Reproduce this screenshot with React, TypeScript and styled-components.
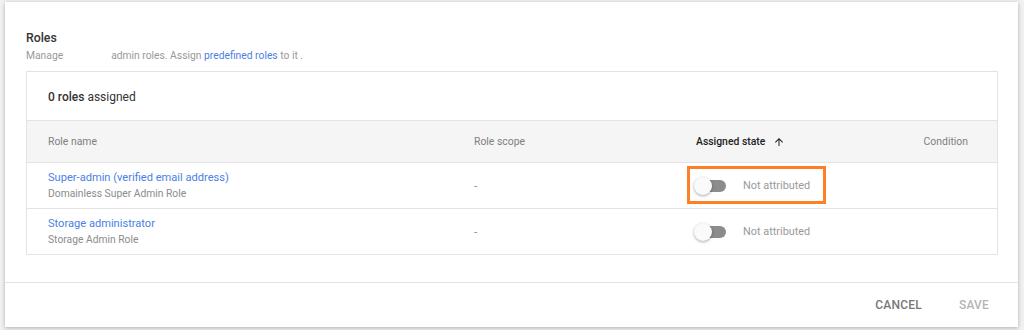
import React from 'react';
import styled, { createGlobalStyle } from 'styled-components';

const GlobalStyle = createGlobalStyle`
  html, body {
    margin: 0;
    padding: 0;
    background-color: #f1f1f1;
    font-family: Roboto, "Liberation Sans", Arial, sans-serif;
  }
`;

const Page = styled.div`
  width: 1024px;
  height: 330px;
  padding: 2px 6px 3px 5px;
  box-sizing: border-box;
  overflow: hidden;
`;

const Dialog = styled.div`
  height: 325px;
  background-color: #fff;
  box-shadow: 0 1px 4px rgba(0, 0, 0, 0.28);
  display: flex;
  flex-direction: column;
`;

const DialogBody = styled.div`
  flex: 1;
  padding: 28px 20px 0 21px;
`;

const Title = styled.div`
  font-size: 12.3px;
  line-height: 16px;
  font-weight: 500;
  color: #333;
`;

const Subtitle = styled.div`
  margin-top: 2px;
  font-size: 10.3px;
  line-height: 15px;
  color: #999;
`;

const Redacted = styled.span`
  display: inline-block;
  width: 48px;
`;

const Link = styled.a`
  color: #4a7fe4;
  text-decoration: none;
  cursor: pointer;
`;

const Card = styled.div`
  margin-top: 8px;
  border: 1px solid #e3e3e3;
`;

const CardHeader = styled.div`
  height: 48px;
  display: flex;
  align-items: center;
  padding: 2px 21px 0;
  box-sizing: border-box;
  font-size: 12px;
  color: #333;

  b {
    font-weight: 500;
    margin-right: 3px;
  }
`;

const GridRow = styled.div<{ $head?: boolean }>`
  display: grid;
  grid-template-columns: 426px 222px 1fr auto;
  align-items: center;
  height: ${p => (p.$head ? '41px' : '45px')};
  padding: 0 29px 0 21px;
  border-top: 1px solid #e3e3e3;
  background-color: ${p => (p.$head ? '#f5f5f5' : '#fff')};
  font-size: 12px;
`;

const HeadCell = styled.div<{ $active?: boolean }>`
  display: flex;
  align-items: center;
  gap: 8px;
  font-size: 10.4px;
  color: ${p => (p.$active ? '#222' : '#808080')};
  font-weight: ${p => (p.$active ? 500 : 400)};
`;

const NameCell = styled.div`
  display: flex;
  flex-direction: column;
  gap: 2px;
  padding-top: 1px;
`;

const RoleLink = styled.a`
  color: #4a7fe4;
  font-size: 11.1px;
  line-height: 14px;
  text-decoration: none;
  cursor: pointer;
`;

const RoleSub = styled.span`
  color: #8c8c8c;
  font-size: 10.3px;
  line-height: 14px;
`;

const ScopeCell = styled.div`
  color: #9a9a9a;
`;

const StateCell = styled.div<{ $highlight?: boolean }>`
  position: relative;
  display: flex;
  align-items: center;
  gap: 17px;
  font-size: 10.9px;
  color: #999;

  ${p =>
    p.$highlight &&
    `
    &::after {
      content: '';
      position: absolute;
      left: -9px;
      top: -11px;
      width: 133px;
      height: 32px;
      border: 3px solid #ff7f27;
      pointer-events: none;
    }
  `}
`;

const Toggle = styled.span`
  position: relative;
  display: inline-block;
  width: 32px;
  height: 18px;
  margin-left: -2px;

  &::before {
    content: '';
    position: absolute;
    left: 6px;
    top: 3px;
    width: 26px;
    height: 12px;
    border-radius: 6px;
    background-color: #8c8c8c;
  }

  &::after {
    content: '';
    position: absolute;
    left: 0;
    top: 0;
    width: 18px;
    height: 18px;
    border-radius: 50%;
    background-color: #fafafa;
    box-shadow: 0 1px 3px rgba(0, 0, 0, 0.35);
  }
`;

const Footer = styled.div`
  height: 44px;
  border-top: 1px solid #e3e3e3;
  display: flex;
  align-items: center;
  justify-content: flex-end;
  gap: 21px;
  padding: 0 21px 0 0;
`;

const FooterButton = styled.button<{ $disabled?: boolean }>`
  background: none;
  border: none;
  padding: 4px 8px;
  font-family: inherit;
  font-size: 12px;
  font-weight: 500;
  letter-spacing: 0.2px;
  text-transform: uppercase;
  color: ${p => (p.$disabled ? '#b5b5b5' : '#777')};
  cursor: ${p => (p.$disabled ? 'default' : 'pointer')};
`;

const ArrowUp = () => (
  <svg width="12" height="12" viewBox="0 0 24 24" fill="#222">
    <path d="M4 12l1.41 1.41L11 7.83V20h2V7.83l5.58 5.59L20 12l-8-8-8 8z" />
  </svg>
);

type Role = {
  name: string;
  description: string;
  scope: string;
  highlight?: boolean;
};

const roles: Role[] = [
  { name: 'Super-admin (verified email address)', description: 'Domainless Super Admin Role', scope: '-', highlight: true },
  { name: 'Storage administrator', description: 'Storage Admin Role', scope: '-' },
];

const App: React.FC = () => {
  return (
    <>
      <GlobalStyle />
      <Page>
        <Dialog>
          <DialogBody>
            <Title>Roles</Title>
            <Subtitle>
              Manage<Redacted />admin roles. Assign <Link>predefined roles</Link> to it .
            </Subtitle>
            <Card>
              <CardHeader>
                <b>0 roles</b> assigned
              </CardHeader>
              <GridRow $head>
                <HeadCell>Role name</HeadCell>
                <HeadCell>Role scope</HeadCell>
                <HeadCell $active>
                  Assigned state <ArrowUp />
                </HeadCell>
                <HeadCell>Condition</HeadCell>
              </GridRow>
              {roles.map(role => (
                <GridRow key={role.name}>
                  <NameCell>
                    <RoleLink>{role.name}</RoleLink>
                    <RoleSub>{role.description}</RoleSub>
                  </NameCell>
                  <ScopeCell>{role.scope}</ScopeCell>
                  <StateCell $highlight={role.highlight}>
                    <Toggle />
                    Not attributed
                  </StateCell>
                  <div />
                </GridRow>
              ))}
            </Card>
          </DialogBody>
          <Footer>
            <FooterButton>Cancel</FooterButton>
            <FooterButton $disabled>Save</FooterButton>
          </Footer>
        </Dialog>
      </Page>
    </>
  );
};

export default App;
